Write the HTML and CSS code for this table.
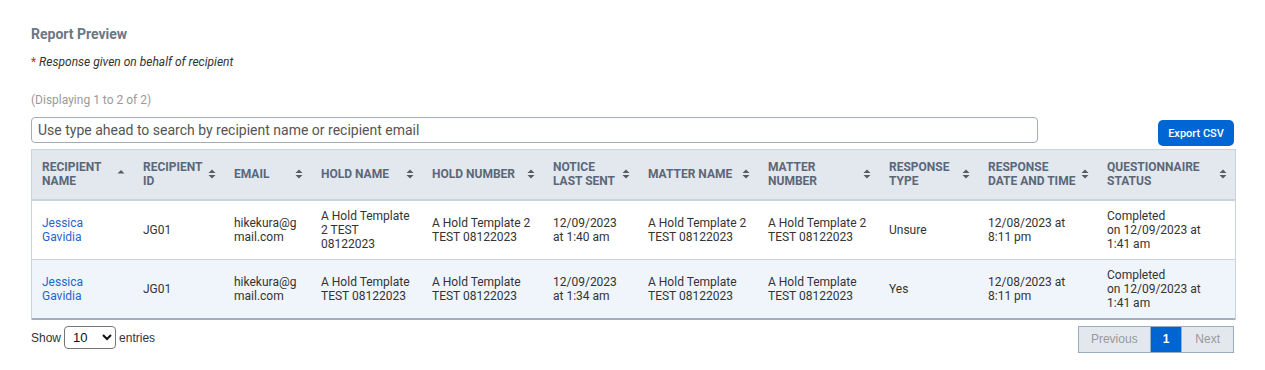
FILE: index.html
```html
<!DOCTYPE html>
<html lang="en">
<head>
<meta charset="utf-8">
<title>Report Preview</title>
<link rel="stylesheet" href="styles.css">
</head>
<body>
<main class="page">
  <h2 class="title">Report Preview</h2>
  <p class="note"><span class="req">*</span> Response given on behalf of recipient</p>
  <p class="count">(Displaying 1 to 2 of 2)</p>
  <div class="toolbar">
    <input class="search" type="text" placeholder="Use type ahead to search by recipient name or recipient email">
    <button class="export">Export CSV</button>
  </div>
  <table class="grid">
    <colgroup>
      <col style="width:101px"><col style="width:91px"><col style="width:87px"><col style="width:111px"><col style="width:121px"><col style="width:95px"><col style="width:120px"><col style="width:121px"><col style="width:99px"><col style="width:119px"><col style="width:138px">
    </colgroup>
    <thead>
      <tr>
        <th><div class="th"><span class="lbl">Recipient Name</span><svg class="sort" viewBox="0 0 8 12"><path d="M0.5 5.5 L4 2 L7.5 5.5 Z"/></svg></div></th>
        <th><div class="th"><span class="lbl">Recipient ID</span><svg class="sort" viewBox="0 0 8 12"><path d="M0.5 5 L4 1.5 L7.5 5 Z M0.5 7 L4 10.5 L7.5 7 Z"/></svg></div></th>
        <th><div class="th"><span class="lbl">Email</span><svg class="sort" viewBox="0 0 8 12"><path d="M0.5 5 L4 1.5 L7.5 5 Z M0.5 7 L4 10.5 L7.5 7 Z"/></svg></div></th>
        <th><div class="th"><span class="lbl">Hold Name</span><svg class="sort" viewBox="0 0 8 12"><path d="M0.5 5 L4 1.5 L7.5 5 Z M0.5 7 L4 10.5 L7.5 7 Z"/></svg></div></th>
        <th><div class="th"><span class="lbl">Hold Number</span><svg class="sort" viewBox="0 0 8 12"><path d="M0.5 5 L4 1.5 L7.5 5 Z M0.5 7 L4 10.5 L7.5 7 Z"/></svg></div></th>
        <th><div class="th"><span class="lbl">Notice Last Sent</span><svg class="sort" viewBox="0 0 8 12"><path d="M0.5 5 L4 1.5 L7.5 5 Z M0.5 7 L4 10.5 L7.5 7 Z"/></svg></div></th>
        <th><div class="th"><span class="lbl">Matter Name</span><svg class="sort" viewBox="0 0 8 12"><path d="M0.5 5 L4 1.5 L7.5 5 Z M0.5 7 L4 10.5 L7.5 7 Z"/></svg></div></th>
        <th><div class="th"><span class="lbl">Matter Number</span><svg class="sort" viewBox="0 0 8 12"><path d="M0.5 5 L4 1.5 L7.5 5 Z M0.5 7 L4 10.5 L7.5 7 Z"/></svg></div></th>
        <th><div class="th"><span class="lbl">Response Type</span><svg class="sort" viewBox="0 0 8 12"><path d="M0.5 5 L4 1.5 L7.5 5 Z M0.5 7 L4 10.5 L7.5 7 Z"/></svg></div></th>
        <th><div class="th"><span class="lbl">Response Date and Time</span><svg class="sort" viewBox="0 0 8 12"><path d="M0.5 5 L4 1.5 L7.5 5 Z M0.5 7 L4 10.5 L7.5 7 Z"/></svg></div></th>
        <th><div class="th"><span class="lbl">Questionnaire Status</span><svg class="sort" viewBox="0 0 8 12"><path d="M0.5 5 L4 1.5 L7.5 5 Z M0.5 7 L4 10.5 L7.5 7 Z"/></svg></div></th>
      </tr>
    </thead>
    <tbody>
      <tr>
        <td><a class="name" href="#">Jessica Gavidia</a></td>
        <td>JG01</td>
        <td class="email">hikekura@gmail.com</td>
        <td>A Hold Template 2 TEST 08122023</td>
        <td>A Hold Template 2 TEST 08122023</td>
        <td>12/09/2023 at 1:40 am</td>
        <td>A Hold Template 2 TEST 08122023</td>
        <td>A Hold Template 2 TEST 08122023</td>
        <td>Unsure</td>
        <td>12/08/2023 at 8:11 pm</td>
        <td>Completed<br>on 12/09/2023 at 1:41 am</td>
      </tr>
      <tr class="alt">
        <td><a class="name" href="#">Jessica Gavidia</a></td>
        <td>JG01</td>
        <td class="email">hikekura@gmail.com</td>
        <td>A Hold Template TEST 08122023</td>
        <td>A Hold Template TEST 08122023</td>
        <td>12/09/2023 at 1:34 am</td>
        <td>A Hold Template TEST 08122023</td>
        <td>A Hold Template TEST 08122023</td>
        <td>Yes</td>
        <td>12/08/2023 at 8:11 pm</td>
        <td>Completed<br>on 12/09/2023 at 1:41 am</td>
      </tr>
    </tbody>
  </table>
  <div class="footer">
    <label class="length">Show
      <select class="len-select"><option>10</option><option>25</option><option>50</option></select>
      entries</label>
    <nav class="pager">
      <span class="pg prev disabled">Previous</span>
      <span class="pg current">1</span>
      <span class="pg next disabled">Next</span>
    </nav>
  </div>
</main>
</body>
</html>
```
FILE: styles.css
```css
* { box-sizing: border-box; }
html, body { margin: 0; background: #fff; }
body { font-family: Roboto, "Liberation Sans", Arial, sans-serif; color: #333; }

.page {
  width: 1265px;
  padding: 26px 31px 0 31px;
}

.title {
  margin: 0;
  font-size: 14px;
  line-height: 16px;
  font-weight: 700;
  color: #6b7785;
}

.note {
  margin: 13px 0 0;
  font-size: 12px;
  line-height: 14px;
  font-style: italic;
  color: #333;
}
.req { color: #e0242b; font-style: normal; }

.count {
  margin: 24px 0 0;
  font-size: 12px;
  line-height: 14px;
  color: #9a9a9a;
}

.toolbar {
  margin-top: 10px;
  display: flex;
  align-items: flex-end;
  justify-content: space-between;
}
.search {
  width: 1007px;
  height: 26px;
  margin-bottom: 3px;
  border: 1px solid #a3adb9;
  border-radius: 4px;
  padding: 0 6px;
  font-family: Roboto, sans-serif;
  font-size: 14px;
  color: #555;
  outline: none;
}
.search::placeholder { color: #555; }

.export {
  width: 76px;
  height: 26px;
  border: none;
  border-radius: 5px;
  background: #0066d4;
  color: #fff;
  font-family: Roboto, sans-serif;
  font-size: 11px;
  font-weight: 500;
  padding: 0;
}

.grid {
  margin-top: 3px;
  width: 1203px;
  table-layout: fixed;
  border-collapse: separate;
  border-spacing: 0;
  border: 1px solid #c9d3de;
  border-bottom: none;
  font-size: 12px;
  line-height: 14px;
}

.grid th {
  background: #e3e8ef;
  padding: 10px 8px 11px 10px;
  border-bottom: 2px solid #c9d3de;
  text-align: left;
  vertical-align: middle;
  font-weight: 700;
  color: #5b6777;
  text-transform: uppercase;
}
.th {
  display: flex;
  align-items: center;
  gap: 4px;
}
.lbl { flex: 1; }
.sort {
  width: 8px;
  height: 12px;
  flex: none;
  fill: #555c66;
}

.grid td {
  padding: 8px 10px;
  height: 59px;
  vertical-align: middle;
  color: #333;
  border-bottom: 1px solid #c9d3de;
}
.grid tr.alt td {
  background: #f0f5fc;
  border-bottom: 2px solid #a2aebc;
  height: 60px;
}
.email { word-break: break-all; }
.name { color: #1f66cc; text-decoration: none; }

.footer {
  margin-top: 6px;
  display: flex;
  justify-content: space-between;
  align-items: flex-start;
  font-family: "Liberation Sans", Arial, sans-serif;
  font-size: 12px;
  color: #333;
}
.length {
  display: flex;
  align-items: center;
  gap: 3px;
  height: 23px;
}
.len-select {
  width: 52px;
  height: 23px;
  border: 1px solid #767676;
  border-radius: 4px;
  background: #fff;
  font-family: "Liberation Sans", Arial, sans-serif;
  font-size: 13px;
  color: #111;
  padding: 0 4px;
}

.pager {
  display: flex;
  border: 1px solid #9aacc0;
}
.pg {
  height: 25px;
  line-height: 25px;
  padding: 0 12px;
  background: #e3e8ef;
  color: #999;
  font-size: 12px;
}
.pg.next { padding: 0 13px; }
.pg + .pg { border-left: 1px solid #9aacc0; }
.pg.current {
  background: #0064d2;
  color: #fff;
  font-weight: 700;
  padding: 0 12px;
}
```
